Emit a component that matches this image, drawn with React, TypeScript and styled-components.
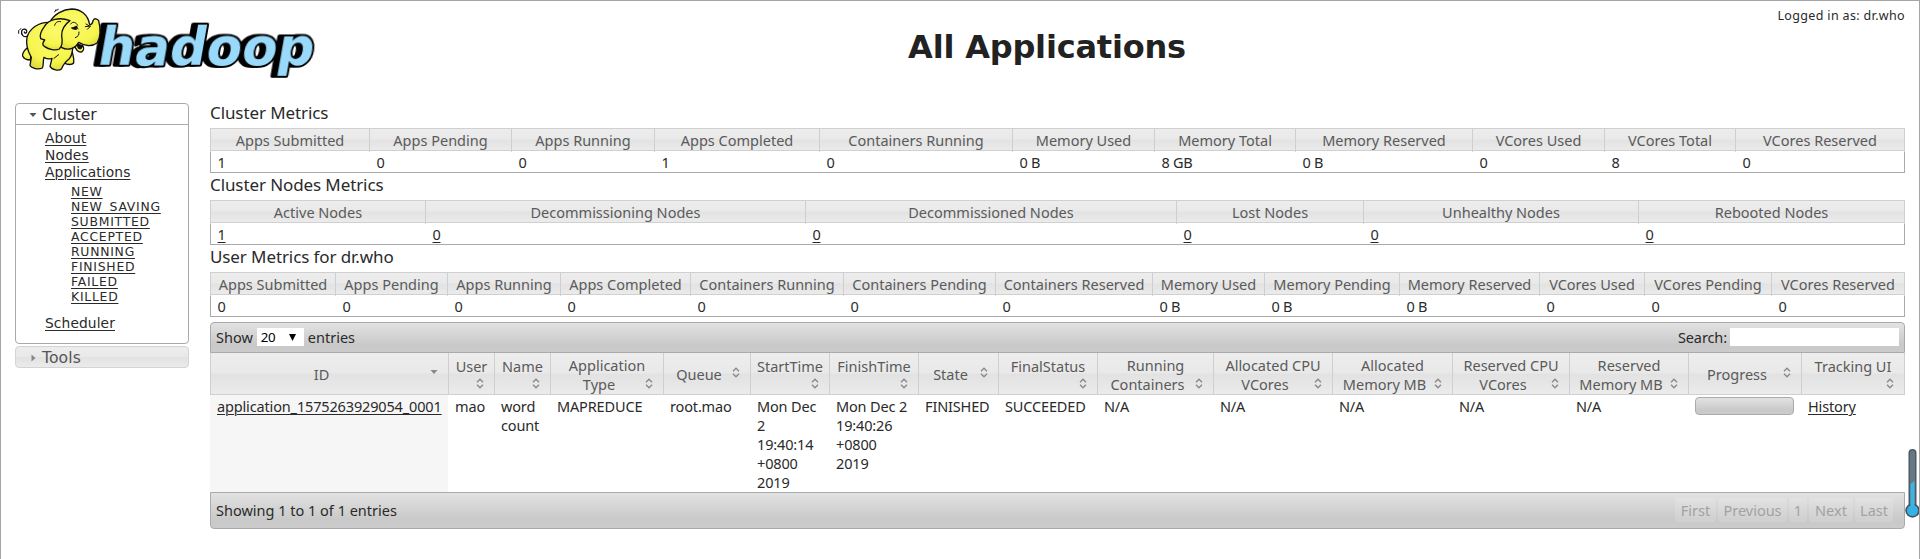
import React from 'react';
import styled, { createGlobalStyle, css } from 'styled-components';

const GlobalStyle = createGlobalStyle`
  * { box-sizing: border-box; }
  body { margin: 0; background: #fff; }
`;

const glass = css`background: linear-gradient(#ededed 0%, #e9e9e9 48%, #e2e2e2 52%, #ebebeb 100%);`;
const soft = css`background: linear-gradient(#e2e2e2 0%, #c9c9c9 75%, #cbcbcb 100%);`;

const Page = styled.div`
  position: relative;
  width: 1920px;
  height: 559px;
  overflow: hidden;
  border: 1px solid #a5a5a5;
  border-bottom: 0;
  color: #2a2a2a;
  font-family: 'Noto Sans', 'Open Sans', sans-serif;
  font-size: 14.5px;
`;
const Header = styled.header`
  display: grid;
  grid-template-columns: 330px 1432px 1fr;
  height: 100px;
`;
const Title = styled.h1`
  margin: 26px 0 0;
  text-align: center;
  font: bold 32px/40px 'DejaVu Sans', sans-serif;
  letter-spacing: -0.2px;
  color: #222;
`;
const Login = styled.div`
  margin: 6px 14px 0 0;
  text-align: right;
  white-space: nowrap;
  font-size: 12.5px;
  line-height: 18px;
  letter-spacing: 0.35px;
`;
const Body = styled.div`display: flex;`;
const Sidebar = styled.nav`
  width: 174px;
  margin: 2px 21px 0 14px;
  font-family: 'DejaVu Sans', sans-serif;
`;
const NavSection = styled.section`
  height: 241px;
  border: 1px solid #aaa;
  border-radius: 4px;
`;
const NavHead = styled.h3<{ $closed?: boolean }>`
  display: flex;
  align-items: center;
  gap: 5px;
  margin: 0;
  padding: 1px 0 0 13px;
  height: 21px;
  font-size: 15.6px;
  font-weight: normal;
  letter-spacing: -0.1px;
  border-bottom: 1px solid #aaa;
  ${(p) => p.$closed && css`
    ${glass}
    height: 22px;
    margin-top: 2px;
    color: #555;
    border: 1px solid #d3d3d3;
    border-radius: 4px;
    letter-spacing: 0.1px;
  `}
`;
const NavList = styled.ul`
  list-style: none;
  margin: 0;
  padding: 5px 0 0 29px;
  font-size: 13.8px;
  line-height: 17px;
  letter-spacing: 0.1px;
`;
const SubList = styled.ul`
  list-style: none;
  margin: 0;
  padding: 3px 0 11px 26px;
  font-size: 12.4px;
  line-height: 15px;
  letter-spacing: 0.75px;
`;
const Link = styled.a`
  color: #2a2a2a;
  text-decoration: underline;
  text-decoration-thickness: 1px;
  text-underline-offset: 2px;
  cursor: pointer;
`;
const Main = styled.main`width: 1695px;`;
const Heading = styled.h2`
  margin: 0;
  height: 27px;
  font-size: 17px;
  line-height: 23px;
  font-weight: normal;
  letter-spacing: -0.1px;
`;
const Grid = styled.div<{ $cols: string }>`
  display: grid;
  grid-template-columns: ${(p) => p.$cols};
`;
const MetricHeadRow = styled(Grid)`
  ${glass}
  height: 23px;
  border: solid #d0d0d0;
  border-width: 1px 0;
`;
const MetricHead = styled.div`
  border-left: 1px solid #cfcfcf;
  text-align: center;
  white-space: nowrap;
  line-height: 23px;
  color: #5a5a5a;
  &:last-child { border-right: 1px solid #cfcfcf; }
`;
const MetricBodyRow = styled(Grid)`
  height: 22px;
  border-bottom: 1px solid #aaa;
  box-shadow: inset 1px 0 #aaa, inset -1px 0 #aaa;
`;
const MetricCell = styled.div`
  padding-left: 7.5px;
  line-height: 23px;
  letter-spacing: -0.3px;
`;
const Bar = styled.div<{ $foot?: boolean }>`
  ${soft}
  display: flex;
  align-items: center;
  justify-content: space-between;
  border: 1px solid #aaa;
  padding: 0 5px 1px;
  height: ${(p) => (p.$foot ? 37 : 31)}px;
  margin-top: ${(p) => (p.$foot ? 0 : 5)}px;
  border-radius: ${(p) => (p.$foot ? '0 0 4px 4px' : '4px 4px 0 0')};
  line-height: 18px;
`;
const Control = styled.label`
  display: flex;
  align-items: center;
  gap: 4px;
`;
const Select = styled.span`
  display: flex;
  align-items: center;
  justify-content: space-between;
  width: 47px;
  height: 18px;
  padding: 0 8px 0 4px;
  background: #fff;
  color: #000;
  font-size: 13.3px;
  letter-spacing: -0.5px;
`;
const SearchInput = styled.input`
  width: 169px;
  height: 18px;
  border: 0;
  background: #fff;
`;
const SearchLabel = styled(Control)`
  gap: 3px;
  letter-spacing: -0.1px;
`;
const DataHeadRow = styled(Grid)`
  ${glass}
  height: 42px;
  border-bottom: 1px solid #d0d0d0;
`;
const DataHead = styled.div`
  display: flex;
  flex-direction: column;
  justify-content: center;
  padding: 1px 6px 0 6px;
  border-left: 1px solid #cfcfcf;
  color: #5a5a5a;
  &:last-child { border-right: 1px solid #cfcfcf; }
`;
const HeadLine = styled.div<{ $short?: boolean }>`
  display: flex;
  justify-content: center;
  align-items: center;
  height: ${(p) => (p.$short ? 16 : 19)}px;
  white-space: nowrap;
`;
const HeadText = styled.span`
  flex: 1;
  display: flex;
  justify-content: center;
`;
const IconBox = styled.span<{ $up?: boolean }>`
  display: flex;
  justify-content: center;
  width: 16px;
  flex: none;
  padding-bottom: ${(p) => (p.$up ? 4 : 0)}px;
`;
const DataRow = styled(Grid)`height: 97px;`;
const DataCell = styled.div<{ $sorted?: boolean }>`
  padding: 2px 0 0 7px;
  line-height: 19px;
  letter-spacing: -0.15px;
  white-space: pre-line;
  background: ${(p) => (p.$sorted ? '#f6f6f6' : '#fff')};
`;
const Progress = styled.div`
  ${soft}
  width: 99px;
  height: 18px;
  border: 1px solid #aaa;
  border-radius: 4px;
`;
const Pager = styled.div`
  display: flex;
  gap: 2px;
  margin-right: 6px;
`;
const PageButton = styled.span<{ $w: number }>`
  width: ${(p) => p.$w}px;
  height: 24px;
  line-height: 24px;
  text-align: center;
  color: #a2a2a2;
  border-radius: 3px;
  background: rgba(255, 255, 255, 0.14);
`;
const Thermometer = styled.svg`
  position: absolute;
  left: 1903px;
  top: 445px;
`;
const LogoSvg = styled.svg`overflow: visible;`;
const LogoWord = styled.text`
  font: bold 53px 'DejaVu Sans', sans-serif;
  filter: drop-shadow(-5px 0 0 #000);
`;

const widths = (edges: number[]) =>
  edges.slice(1).map((e, i) => `${e - edges[i]}px`).join(' ');

interface Metrics { title: string; edges: number[]; items: [string, string][]; linked?: boolean }
const metrics: Metrics[] = [
  {
    title: 'Cluster Metrics',
    edges: [210, 369, 511, 654, 819, 1012, 1154, 1295, 1472, 1604, 1735, 1905],
    items: [
      ['Apps Submitted', '1'], ['Apps Pending', '0'], ['Apps Running', '0'], ['Apps Completed', '1'],
      ['Containers Running', '0'], ['Memory Used', '0 B'], ['Memory Total', '8 GB'], ['Memory Reserved', '0 B'],
      ['VCores Used', '0'], ['VCores Total', '8'], ['VCores Reserved', '0'],
    ],
  },
  {
    title: 'Cluster Nodes Metrics',
    edges: [210, 425, 805, 1176, 1363, 1638, 1905],
    linked: true,
    items: [
      ['Active Nodes', '1'], ['Decommissioning Nodes', '0'], ['Decommissioned Nodes', '0'],
      ['Lost Nodes', '0'], ['Unhealthy Nodes', '0'], ['Rebooted Nodes', '0'],
    ],
  },
  {
    title: 'User Metrics for dr.who',
    edges: [210, 335, 447, 560, 690, 843, 995, 1152, 1264, 1399, 1539, 1644, 1771, 1905],
    items: [
      ['Apps Submitted', '0'], ['Apps Pending', '0'], ['Apps Running', '0'], ['Apps Completed', '0'],
      ['Containers Running', '0'], ['Containers Pending', '0'], ['Containers Reserved', '0'],
      ['Memory Used', '0 B'], ['Memory Pending', '0 B'], ['Memory Reserved', '0 B'],
      ['VCores Used', '0'], ['VCores Pending', '0'], ['VCores Reserved', '0'],
    ],
  },
];

const dataCols = widths([210, 448, 494, 550, 663, 750, 829, 918, 998, 1097, 1213, 1332, 1452, 1569, 1688, 1801, 1905]);
/* An empty last line places the sort icon on a line of its own. */
const dataHeads: string[][] = [
  ['ID'], ['User', ''], ['Name', ''], ['Application', 'Type'], ['Queue'], ['StartTime', ''], ['FinishTime', ''],
  ['State'], ['FinalStatus', ''], ['Running', 'Containers'], ['Allocated CPU', 'VCores'], ['Allocated', 'Memory MB'],
  ['Reserved CPU', 'VCores'], ['Reserved', 'Memory MB'], ['Progress'], ['Tracking UI', ''],
];
const dataCells = [
  'mao', 'word\ncount', 'MAPREDUCE', 'root.mao', 'Mon Dec\n2\n19:40:14\n+0800\n2019',
  'Mon Dec 2\n19:40:26\n+0800\n2019', 'FINISHED', 'SUCCEEDED', 'N/A', 'N/A', 'N/A', 'N/A', 'N/A',
];
const states = ['NEW', 'NEW_SAVING', 'SUBMITTED', 'ACCEPTED', 'RUNNING', 'FINISHED', 'FAILED', 'KILLED'];
const pages: [string, number][] = [['First', 41], ['Previous', 69], ['1', 18], ['Next', 44], ['Last', 38]];

const SortIcon = () => (
  <svg width="8" height="11" viewBox="0 0 8 11" fill="none" stroke="#888" strokeWidth="1.3">
    <path d="M1 4.2 4 1.2 7 4.2M1 6.8 4 9.8 7 6.8" />
  </svg>
);
const Caret = ({ right, color = '#555' }: { right?: boolean; color?: string }) => (
  <svg width="8" height="8" viewBox="0 0 8 8" fill={color}>
    <path d={right ? 'M2.5 0.5 6.5 4 2.5 7.5Z' : 'M0.5 2H7.5L4 6Z'} />
  </svg>
);

const Logo = () => (
  <LogoSvg width="330" height="100" viewBox="1 1 330 100">
    <defs>
      <radialGradient id="skin" cx="50%" cy="35%" r="75%">
        <stop offset="0" stopColor="#fbfb6c" />
        <stop offset="0.65" stopColor="#f6f54e" />
        <stop offset="1" stopColor="#d6d034" />
      </radialGradient>
    </defs>
    <g transform="translate(96 65) skewX(-10)" strokeLinejoin="round">
      <LogoWord x="0" y="0" textLength="216" lengthAdjust="spacingAndGlyphs" fill="#99d9fa" stroke="#000" strokeWidth="4" paintOrder="stroke">hadoop</LogoWord>
    </g>
    <g transform="translate(10 0) scale(0.3333)" fill="url(#skin)" stroke="#111" strokeWidth="4" strokeLinejoin="round" strokeLinecap="round">
      <path d="M52 108C42 114 32 104 35 93C39 84 52 87 50 96C48 101 43 100 43 96" fill="none" />
      <path d="M50 145C42 153 36 161 38 168C42 178 52 180 62 180V150Z" />
      <path d="M186 152C188 165 194 176 191 189C186 196 170 194 165 190L160 165Z" />
      <path d="M118 67C85 66 58 86 51 112C47 134 54 155 64 172L60 196C64 206 86 209 97 204C102 195 98 182 102 172C110 177 119 178 126 175L120 199C126 210 147 214 155 206C159 193 168 184 178 176C185 168 187 158 188 145L200 110L150 60Z" />
      <path d="M192 132C196 149 206 160 216 155C222 151 222 143 218 137Z" />
      <path d="M120 66C132 42 160 28 185 27C212 27 234 44 239 74C246 75 248 68 250 60C254 54 262 56 266 62C272 86 272 110 262 128C246 141 224 138 206 127C196 146 174 153 154 142L126 100Z" />
      <path d="M203 132C202 146 212 152 217 139Z" fill="#111" />
      <path d="M180 62C148 50 116 58 103 80C94 92 88 106 92 116L104 120C97 130 96 136 104 140C117 149 136 152 148 147C158 138 158 124 155 108C154 88 162 75 180 62Z" />
      <path d="M152 65C140 62 136 70 134 76M182 72C188 63 198 66 203 76M184 84L200 80L204 87M207 96C208 105 204 110 196 113M228 72L238 78M226 80L242 78L232 88M132 175L146 164M26 100V92M29 89L33 86M134 36L138 29M140 31L145 28" fill="none" strokeWidth="3" />
      <path d="M188 86L200 79L198 88Z" fill="#111" />
    </g>
  </LogoSvg>
);

export default function App() {
  return (
    <>
      <GlobalStyle />
      <Page>
        <Header>
          <Logo />
          <Title>All Applications</Title>
          <Login>Logged in as: dr.who</Login>
        </Header>
        <Body>
          <Sidebar>
            <NavSection>
              <NavHead><Caret />Cluster</NavHead>
              <NavList>
                <li><Link>About</Link></li>
                <li><Link>Nodes</Link></li>
                <li>
                  <Link>Applications</Link>
                  <SubList>{states.map((s) => <li key={s}><Link>{s}</Link></li>)}</SubList>
                </li>
                <li><Link>Scheduler</Link></li>
              </NavList>
            </NavSection>
            <NavHead $closed><Caret right color="#888" />Tools</NavHead>
          </Sidebar>
          <Main>
            {metrics.map((m) => (
              <section key={m.title}>
                <Heading>{m.title}</Heading>
                <MetricHeadRow $cols={widths(m.edges)}>
                  {m.items.map(([name]) => <MetricHead key={name}>{name}</MetricHead>)}
                </MetricHeadRow>
                <MetricBodyRow $cols={widths(m.edges)}>
                  {m.items.map(([name, value]) => (
                    <MetricCell key={name}>{m.linked ? <Link>{value}</Link> : value}</MetricCell>
                  ))}
                </MetricBodyRow>
              </section>
            ))}
            <Bar>
              <Control>
                Show
                <Select>20<svg width="7" height="8" viewBox="0 0 7 8"><path d="M0 1H7L3.500 8Z" /></svg></Select>
                entries
              </Control>
              <SearchLabel>Search:<SearchInput /></SearchLabel>
            </Bar>
            <DataHeadRow $cols={dataCols}>
              {dataHeads.map((lines, i) => (
                <DataHead key={i}>
                  {lines.map((text, j) => (
                    <HeadLine key={j} $short={text === ''}>
                      <HeadText>{text}</HeadText>
                      {j === lines.length - 1 && (
                        <IconBox $up={lines.length === 1}>{i === 0 ? <Caret color="#888" /> : <SortIcon />}</IconBox>
                      )}
                    </HeadLine>
                  ))}
                </DataHead>
              ))}
            </DataHeadRow>
            <DataRow $cols={dataCols}>
              <DataCell $sorted><Link>application_1575263929054_0001</Link></DataCell>
              {dataCells.map((text, i) => <DataCell key={i}>{text}</DataCell>)}
              <DataCell><Progress /></DataCell>
              <DataCell><Link>History</Link></DataCell>
            </DataRow>
            <Bar $foot>
              <span>Showing 1 to 1 of 1 entries</span>
              <Pager>{pages.map(([label, w]) => <PageButton key={label} $w={w}>{label}</PageButton>)}</Pager>
            </Bar>
          </Main>
        </Body>
        <Thermometer width="17" height="76" viewBox="0 0 17 76">
          <rect x="4.500" y="3" width="8" height="62" rx="4" fill="#4c5a66" />
          <rect x="6" y="4.500" width="5" height="56" rx="2.500" fill="#687883" />
          <circle cx="8.500" cy="64.500" r="7.200" fill="#46535e" />
          <path d="M6.500 38 10.500 35V62H6.500Z" fill="#3db4e4" />
          <circle cx="8.500" cy="64.500" r="5.500" fill="#35b2e5" />
        </Thermometer>
      </Page>
    </>
  );
}
